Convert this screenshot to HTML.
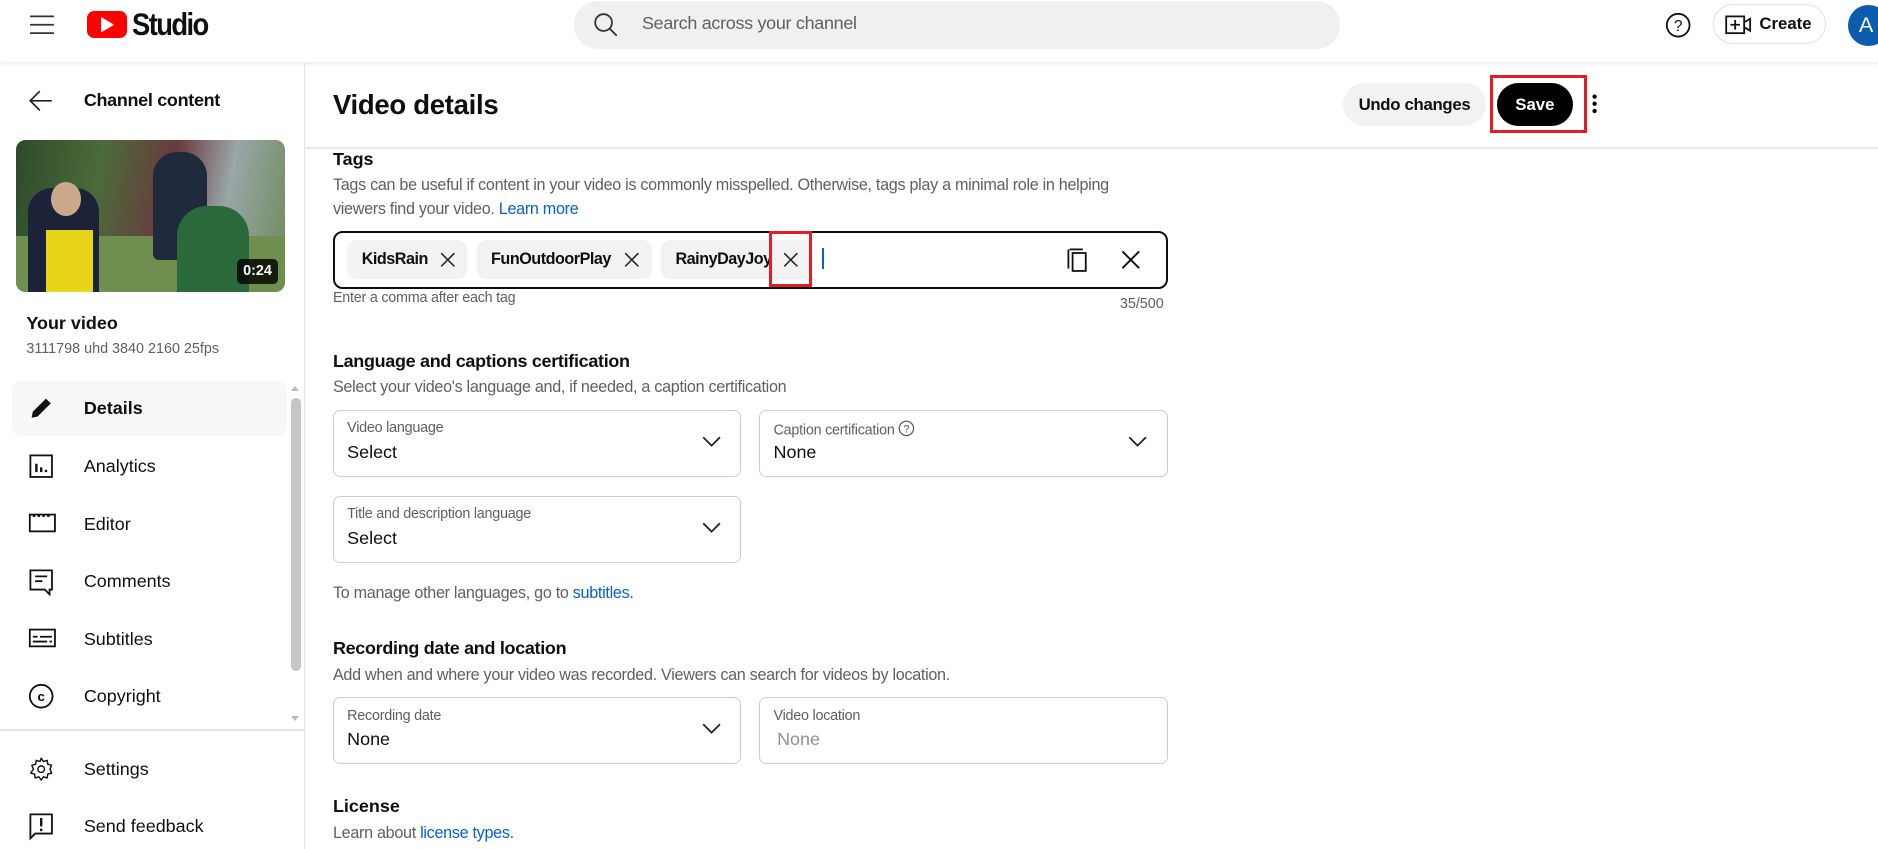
<!DOCTYPE html>
<html><head><meta charset="utf-8"><style>
html{zoom:1.19770}
body{margin:0;width:1568px;height:709px;overflow:hidden;background:#fff;font-family:"Liberation Sans",Arial,sans-serif;color:#0f0f0f;position:relative}
.a{position:absolute;white-space:nowrap}
.m{font-weight:bold}
.g{color:#606060}
.lnk{color:#065fd4}
.t{letter-spacing:-0.25px}
.box{position:absolute;border:1px solid #ccc;border-radius:6px;box-sizing:border-box}
.lbl{position:absolute;left:11px;top:8px;font-size:12px;color:#606060;letter-spacing:-0.2px}
.val{position:absolute;left:11px;top:26px;font-size:15px}
.chev{position:absolute;right:16px;top:21px}
.chip{position:absolute;top:200px;height:33px;background:#f2f2f2;border-radius:8px}
.ct{position:absolute;top:209px;font-size:13.5px;font-weight:bold;letter-spacing:-0.4px}
.cx{position:absolute;top:210px}
.nav{position:absolute;left:70px;font-size:15px}
.ic{position:absolute;left:23px}
</style></head><body>
<svg width="0" height="0" style="position:absolute"><defs><path id="cv" d="M1 1l7 7 7-7" fill="none" stroke="#222" stroke-width="1.5"/><path id="xx" d="M1 1l11 11M12 1L1 12" stroke="#222" stroke-width="1.3"/></defs></svg>
<!-- header -->
<div class="a" style="left:0;top:0;width:1568px;height:52px;box-shadow:0 1px 4px rgba(0,0,0,.12)"></div>
<svg class="a" style="left:25px;top:12px" width="20" height="18" viewBox="0 0 20 18"><path d="M0 2h20M0 9h20M0 16h20" stroke="#333" stroke-width="1.5"/></svg>
<div class="a" style="left:73px;top:9px;width:33px;height:23px;background:#f00;border-radius:6px"></div>
<svg class="a" style="left:84px;top:14px" width="12" height="13"><path d="M0 0L11 6.5L0 13z" fill="#fff"/></svg>
<div class="a" style="left:110px;top:6px;font-size:26px;font-weight:bold;letter-spacing:-1.5px;transform:scaleX(.88);transform-origin:left">Studio</div>
<div class="a" style="left:479px;top:1px;width:640px;height:40px;background:#f0f0f0;border-radius:20px"></div>
<svg class="a" style="left:496px;top:11px" width="20" height="20"><circle cx="8" cy="8" r="7" fill="none" stroke="#333" stroke-width="1.5"/><path d="M13 13l6 6" stroke="#333" stroke-width="1.5"/></svg>
<div class="a g t" style="left:536px;top:11px;font-size:15px">Search across your channel</div>
<svg class="a" style="left:1390px;top:10px" width="22" height="22"><circle cx="11" cy="11" r="9.5" fill="none" stroke="#111" stroke-width="1.5"/><text x="11" y="16" font-size="13" text-anchor="middle" font-family="Liberation Sans" fill="#111">?</text></svg>
<div class="a" style="left:1430px;top:3px;width:95px;height:34px;border:1px solid #e0e0e0;border-radius:18px;box-sizing:border-box"></div>
<svg class="a" style="left:1440px;top:12px" width="24" height="18"><rect x="1" y="2" width="15" height="14" fill="none" stroke="#111" stroke-width="1.5"/><path d="M8.5 5v8M4.5 9h8M16 7l5-3v10l-5-3" fill="none" stroke="#111" stroke-width="1.5"/></svg>
<div class="a m" style="left:1469px;top:12px;font-size:14px">Create</div>
<div class="a" style="left:1543px;top:4px;width:34px;height:34px;border-radius:50%;background:#0b5cad;color:#fff;font-size:18px;line-height:34px;text-indent:9px">A</div>
<!-- sidebar -->
<div class="a" style="left:254px;top:52px;width:1px;height:657px;background:#e5e5e5"></div>
<svg class="a" style="left:24px;top:75px" width="20" height="18"><path d="M19 9H2M9 1L1 9l8 8" fill="none" stroke="#222" stroke-width="1.4"/></svg>
<div class="a m t" style="left:70px;top:75px;font-size:15px">Channel content</div>
<div class="a" style="left:13px;top:117px;width:225px;height:127px;border-radius:8px;overflow:hidden;background:linear-gradient(100deg,#2d4a2a 0%,#4b6b3a 30%,#6a3a3e 55%,#9aa6a8 75%,#6e8a5a 100%)">
 <div class="a" style="left:0;top:80px;width:225px;height:47px;background:#6f8f4e"></div>
 <div class="a" style="left:10px;top:40px;width:60px;height:87px;background:#1c2338;border-radius:20px 20px 0 0"></div>
 <div class="a" style="left:25px;top:75px;width:40px;height:52px;background:#e7d51a"></div>
 <div class="a" style="left:30px;top:35px;width:25px;height:28px;background:#cba88a;border-radius:50%"></div>
 <div class="a" style="left:115px;top:10px;width:45px;height:90px;background:#1f2a3c;border-radius:20px 20px 5px 5px"></div>
 <div class="a" style="left:135px;top:55px;width:60px;height:72px;background:#2a6a3a;border-radius:25px 25px 0 0"></div>
 <div class="a" style="left:185px;top:99px;width:34px;height:21px;background:rgba(0,0,0,.8);border-radius:4px;color:#fff;font-size:12px;font-weight:bold;line-height:21px;text-align:center">0:24</div>
</div>
<div class="a m" style="left:22px;top:261px;font-size:15px">Your video</div>
<div class="a g" style="left:22px;top:285px;font-size:12px">3111798 uhd 3840 2160 25fps</div>
<div class="a" style="left:10px;top:318px;width:230px;height:46px;background:#f7f7f7;border-radius:8px"></div>
<svg class="ic" style="top:330px" width="22" height="22"><path d="M3 19l1-5L15 3l4 4L8 18z" fill="#111"/></svg>
<div class="nav m" style="top:332px">Details</div>
<svg class="ic" style="top:378px" width="22" height="22"><rect x="2" y="2" width="18" height="18" fill="none" stroke="#111" stroke-width="1.5"/><path d="M7 9v7M11 12v4M15 14v2" stroke="#111" stroke-width="2"/></svg>
<div class="nav" style="top:381px">Analytics</div>
<svg class="ic" style="top:427px" width="24" height="20"><rect x="1.5" y="3" width="21" height="14" fill="none" stroke="#111" stroke-width="1.5"/><path d="M5 3v2M9 3v2M13 3v2M17 3v2" stroke="#111" stroke-width="2"/></svg>
<div class="nav" style="top:429px">Editor</div>
<svg class="ic" style="top:474px" width="22" height="24"><path d="M2 2h18v16h-2v4l-4-4H2z" fill="none" stroke="#111" stroke-width="1.5"/><path d="M6 7h10M6 11h6" stroke="#111" stroke-width="1.5"/></svg>
<div class="nav" style="top:477px">Comments</div>
<svg class="ic" style="top:523px" width="24" height="20"><rect x="1.5" y="3" width="21" height="14" fill="none" stroke="#111" stroke-width="1.5"/><path d="M4 9h4M10 9h10M4 13h12M18 13h2" stroke="#111" stroke-width="1.5"/></svg>
<div class="nav" style="top:525px">Subtitles</div>
<svg class="ic" style="top:570px" width="22" height="22"><circle cx="11" cy="11" r="9.5" fill="none" stroke="#111" stroke-width="1.5"/><text x="11" y="15" font-size="11" font-weight="bold" text-anchor="middle" font-family="Liberation Sans">c</text></svg>
<div class="nav" style="top:573px">Copyright</div>
<div class="a" style="left:242px;top:318px;width:9px;height:290px"><div style="margin:4px auto 0;width:0;border:4px solid transparent;border-bottom:5px solid #bbb;border-top:0"></div><div class="a" style="left:1px;top:14px;width:8px;height:228px;background:#c6c6c6;border-radius:4px"></div><div class="a" style="left:1px;top:280px;width:0;border:4px solid transparent;border-top:5px solid #bbb;border-bottom:0"></div></div>
<div class="a" style="left:0;top:609px;width:254px;height:1px;background:#e5e5e5"></div>
<svg class="ic" style="top:631px" width="22" height="22" viewBox="0 0 24 24"><path d="M12 9a3 3 0 1 0 0 6 3 3 0 0 0 0-6zm0-7l2 3 3.5-1 .5 3.5 3.5 1-1.5 3.5 1.5 3.5-3.5 1-.5 3.5-3.5-1-2 3-2-3-3.5 1-.5-3.5-3.5-1L5 12 3.5 8.5l3.5-1L7.5 4 11 5z" fill="none" stroke="#111" stroke-width="1.3" stroke-linejoin="round"/></svg>
<div class="nav" style="top:634px">Settings</div>
<svg class="ic" style="top:678px" width="22" height="24"><path d="M2 2h18v16H6l-4 4z" fill="none" stroke="#111" stroke-width="1.5"/><path d="M11 5v7M11 14v2" stroke="#111" stroke-width="2"/></svg>
<div class="nav" style="top:681px">Send feedback</div>
<!-- main header -->
<div class="a t" style="left:278px;top:74px;font-size:23px;font-weight:bold">Video details</div>
<div class="a t" style="left:1121px;top:69px;width:120px;height:36px;background:#f2f2f2;border-radius:18px;font-size:14px;font-weight:bold;line-height:36px;text-align:center">Undo changes</div>
<div class="a" style="left:1250px;top:69px;width:63px;height:36px;background:#000;border-radius:18px;color:#fff;font-size:14px;font-weight:bold;line-height:36px;text-align:center">Save</div>
<div class="a" style="left:1244px;top:63px;width:81px;height:48px;border:3px solid #e31d24;box-sizing:border-box"></div>
<svg class="a" style="left:1328px;top:78px" width="6" height="18"><circle cx="3" cy="3" r="1.8"/><circle cx="3" cy="9" r="1.8"/><circle cx="3" cy="15" r="1.8"/></svg>
<div class="a" style="left:255px;top:123px;width:1313px;height:1px;background:#e8e8e8"></div>
<!-- tags -->
<div class="a m" style="left:278px;top:124px;font-size:15px">Tags</div>
<div class="a g t" style="left:278px;top:145px;font-size:13.5px;line-height:20px;white-space:normal;width:680px">Tags can be useful if content in your video is commonly misspelled. Otherwise, tags play a minimal role in helping viewers find your video. <span class="lnk">Learn more</span></div>
<div class="a" style="left:278px;top:193px;width:697px;height:48px;border:2px solid #0f0f0f;border-radius:8px;box-sizing:border-box"></div>
<div class="chip" style="left:290px;width:100px"></div><div class="ct" style="left:302px">KidsRain</div><svg class="cx" style="left:367px" width="13" height="13"><use href="#xx"/></svg>
<div class="chip" style="left:398px;width:146px"></div><div class="ct" style="left:410px">FunOutdoorPlay</div><svg class="cx" style="left:521px" width="13" height="13"><use href="#xx"/></svg>
<div class="chip" style="left:552px;width:125px"></div>
<div class="a" style="left:552px;top:200px;width:94px;height:33px;overflow:hidden"><div class="ct" style="left:12px;top:9px">RainyDayJoy</div></div>
<div class="a" style="left:645px;top:200px;width:30px;height:33px;background:#f2f2f2"></div>
<svg class="cx" style="left:654px" width="13" height="13"><use href="#xx"/></svg>
<div class="a" style="left:642px;top:193px;width:36px;height:47px;border:3px solid #e31d24;box-sizing:border-box"></div>
<div class="a" style="left:686px;top:207px;width:2px;height:18px;background:#065fd4"></div>
<svg class="a" style="left:890px;top:206px" width="20" height="22"><path d="M3 2h11" stroke="#111" stroke-width="1.5" fill="none"/><path d="M2 2v16" stroke="#111" stroke-width="1.5"/><rect x="5.5" y="5" width="11" height="15" fill="none" stroke="#111" stroke-width="1.5"/></svg>
<svg class="a" style="left:935px;top:208px" width="18" height="18"><path d="M2 2l14 14M16 2L2 16" stroke="#111" stroke-width="1.6"/></svg>
<div class="a g" style="left:278px;top:242px;font-size:12px;letter-spacing:-0.2px">Enter a comma after each tag</div>
<div class="a g" style="left:935px;top:247px;font-size:12px">35/500</div>
<!-- language -->
<div class="a m t" style="left:278px;top:293px;font-size:15px">Language and captions certification</div>
<div class="a g t" style="left:278px;top:316px;font-size:13.5px">Select your video's language and, if needed, a caption certification</div>
<div class="box" style="left:278px;top:342px;width:341px;height:56px"><div class="lbl">Video language</div><div class="val">Select</div><svg class="chev" width="16" height="10"><use href="#cv"/></svg></div>
<div class="box" style="left:634px;top:342px;width:341px;height:56px"><div class="lbl">Caption certification <svg width="14" height="14" style="vertical-align:-2px"><circle cx="7" cy="7" r="6" fill="none" stroke="#555"/><text x="7" y="10.5" font-size="9" text-anchor="middle" fill="#555" font-family="Liberation Sans">?</text></svg></div><div class="val">None</div><svg class="chev" width="16" height="10"><use href="#cv"/></svg></div>
<div class="box" style="left:278px;top:414px;width:341px;height:56px"><div class="lbl">Title and description language</div><div class="val">Select</div><svg class="chev" width="16" height="10"><use href="#cv"/></svg></div>
<div class="a g t" style="left:278px;top:488px;font-size:13.5px">To manage other languages, go to <span class="lnk">subtitles.</span></div>
<!-- recording -->
<div class="a m t" style="left:278px;top:533px;font-size:15px">Recording date and location</div>
<div class="a g t" style="left:278px;top:556px;font-size:13.5px">Add when and where your video was recorded. Viewers can search for videos by location.</div>
<div class="box" style="left:278px;top:582px;width:341px;height:56px"><div class="lbl">Recording date</div><div class="val">None</div><svg class="chev" width="16" height="10"><use href="#cv"/></svg></div>
<div class="box" style="left:634px;top:582px;width:341px;height:56px"><div class="lbl">Video location</div><div class="val" style="color:#909090;left:14px">None</div></div>
<div class="a m" style="left:278px;top:665px;font-size:15px">License</div>
<div class="a g t" style="left:278px;top:688px;font-size:13.5px">Learn about <span class="lnk">license types.</span></div>
</body></html>
